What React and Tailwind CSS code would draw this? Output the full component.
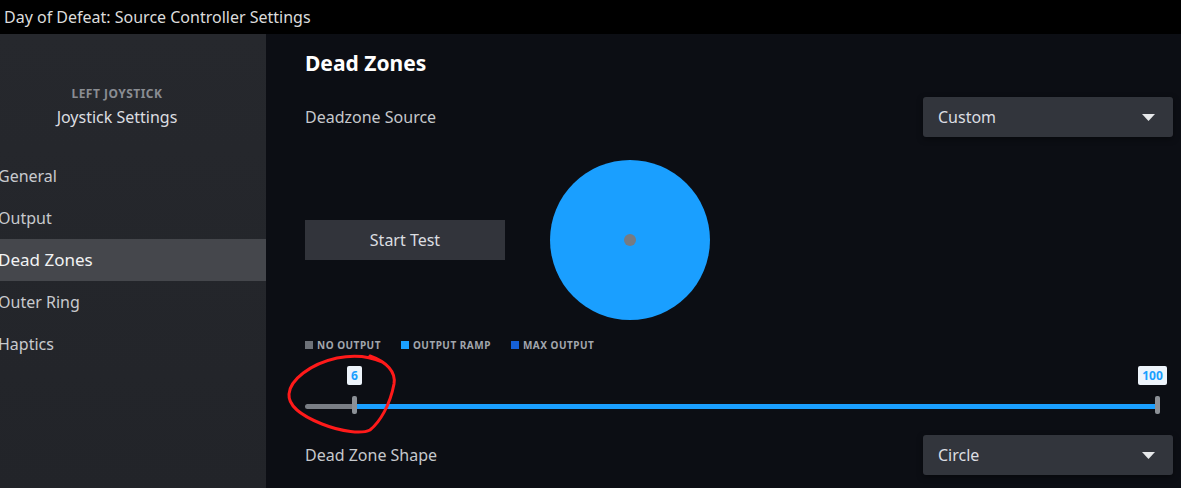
import React from "react";

const nav = ["General", "Output", "Dead Zones", "Outer Ring", "Haptics"];

const Dropdown = ({ value }) => (
  <div className="w-[250px] h-10 rounded-[3px] bg-[#32353c] flex items-center justify-between pl-[15px] pr-[18px] text-[16px] text-[#dcdee2] shadow-[0_2px_6px_rgba(0,0,0,0.4)]">
    <span>{value}</span>
    <svg width="13" height="7" viewBox="0 0 13 7">
      <path d="M0 0h13L6.5 7z" fill="#e6e8ea" />
    </svg>
  </div>
);

export default function App() {
  return (
    <div className="w-[1181px] h-[488px] overflow-hidden bg-[#0c0e14] flex flex-col font-['Noto_Sans',sans-serif]">
      <div className="h-[34px] bg-black flex items-center pl-[4px] text-[16px] text-[#dcdcdc] shrink-0">
        Day of Defeat: Source Controller Settings
      </div>
      <div className="flex flex-1">
        <div className="w-[266px] bg-gradient-to-b from-[#26282d] to-[#222429] flex flex-col shrink-0">
          <div className="flex flex-col items-center pt-[52px] pr-[32px]">
            <span className="text-[12px] font-bold tracking-[0.04em] text-[#8a8d93] leading-[16px]">LEFT JOYSTICK</span>
            <span className="text-[16px] text-[#dcdee1] leading-[22px] mt-[4px]">Joystick Settings</span>
          </div>
          <div className="flex flex-col mt-[27px]">
            {nav.map((n) => (
              <div
                key={n}
                className={`h-[42px] flex items-center -ml-[2px] text-[16px] ${
                  n === "Dead Zones" ? "bg-[#45474c] text-[#f2f3f4] text-[17px]" : "text-[#c8cace]"
                }`}
              >
                {n}
              </div>
            ))}
          </div>
        </div>

        <div className="flex-1 relative pl-[39px] pr-[8px] flex flex-col">
          <div className="text-[21px] font-bold text-white mt-[15px] leading-[28px]">Dead Zones</div>

          <div className="flex items-center justify-between mt-[20px]">
            <span className="text-[16px] text-[#c6c8cc]">Deadzone Source</span>
            <Dropdown value="Custom" />
          </div>

          <div className="flex items-center mt-[23px] gap-[45px]">
            <button className="w-[200px] h-10 bg-[#32343b] text-[16px] text-[#dcdee1]">Start Test</button>
            <div className="w-[160px] h-[160px] rounded-full bg-[#1a9fff] flex items-center justify-center">
              <div className="w-[12px] h-[12px] rounded-full bg-[#767b83]" />
            </div>
          </div>

          <div className="flex items-center gap-[20px] mt-[18px] text-[10px] font-bold tracking-[0.05em] text-[#a2a6ad] leading-[14px]">
            <div className="flex items-center gap-[4px]">
              <span className="w-[8px] h-[8px] bg-[#6d7178]" />
              NO OUTPUT
            </div>
            <div className="flex items-center gap-[4px]">
              <span className="w-[8px] h-[8px] bg-[#1a9fff]" />
              OUTPUT RAMP
            </div>
            <div className="flex items-center gap-[4px]">
              <span className="w-[8px] h-[8px] bg-[#1560d6]" />
              MAX OUTPUT
            </div>
          </div>

          <div className="relative h-[58px] mt-[8px] w-[854px]">
            <div className="absolute left-[42px] top-[6px] w-[15px] h-[19px] rounded-[2px] bg-[#eef4fb] text-[#1a9fff] text-[12px] font-bold flex items-center justify-center">6</div>
            <div className="absolute left-[833px] top-[6px] w-[29px] h-[19px] rounded-[2px] bg-[#eef4fb] text-[#1a9fff] text-[12px] font-bold flex items-center justify-center">100</div>
            <div className="absolute left-0 right-0 top-[44px] h-[5px] flex">
              <div className="w-[48px] h-full bg-[#7a7e85] rounded-l-full" />
              <div className="flex-1 h-full bg-[#1a9fff]" />
            </div>
            <div className="absolute left-[47px] top-[36px] w-[5px] h-[18px] rounded-[2px] bg-[#8c9096]" />
            <div className="absolute left-[850px] top-[36px] w-[5px] h-[18px] rounded-[2px] bg-[#8c9096]" />
          </div>

          <div className="flex items-center justify-between mt-[17px]">
            <span className="text-[16px] text-[#c6c8cc]">Dead Zone Shape</span>
            <Dropdown value="Circle" />
          </div>

          <svg className="absolute left-[16px] top-[316px] pointer-events-none" width="120" height="90" viewBox="0 0 120 90">
            <path
              d="M88 6 C105 12 114 22 112 34 C108 55 98 72 88 80 C80 84 60 82 40 74 C20 66 6 56 7 44 C8 30 28 14 55 8 C70 5 85 5 100 12"
              fill="none"
              stroke="#ff1a1a"
              strokeWidth="3"
              strokeLinecap="round"
              strokeLinejoin="round"
            />
          </svg>
        </div>
      </div>
    </div>
  );
}
